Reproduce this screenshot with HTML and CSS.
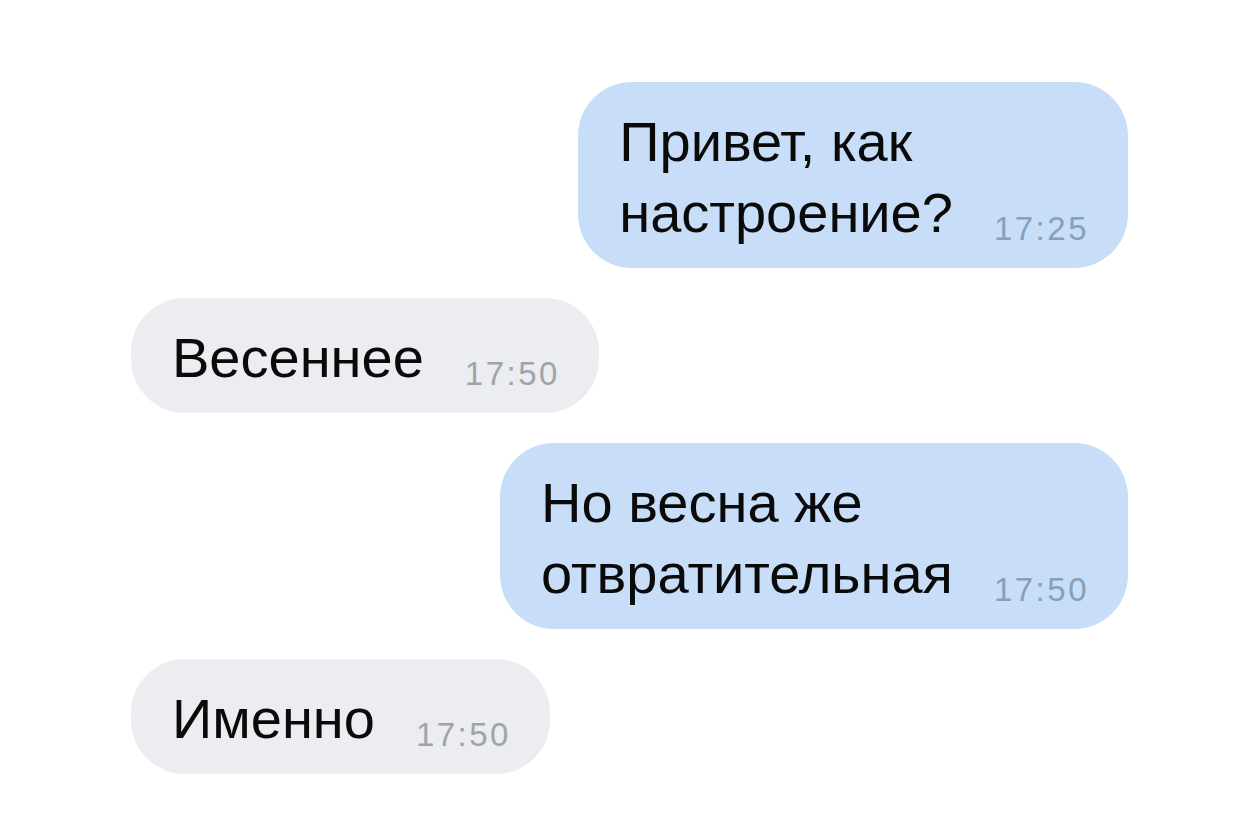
FILE: index.html
```html
<!DOCTYPE html>
<html lang="ru">
<head>
  <meta charset="UTF-8" />
  <meta name="viewport" content="width=device-width, initial-scale=1.0"/>
  <title>Чат</title>
  <link rel="stylesheet" href="styles.css">
</head>
<body>
  <div class="chat">
    <div class="msg out">
      <div class="bubble">
        <div class="text">Привет, как<br>настроение?</div>
        <span class="time">17:25</span>
      </div>
    </div>

    <div class="msg in">
      <div class="bubble">
        <div class="text">Весеннее</div>
        <span class="time">17:50</span>
      </div>
    </div>

    <div class="msg out">
      <div class="bubble">
        <div class="text">Но весна же<br>отвратительная</div>
        <span class="time">17:50</span>
      </div>
    </div>

    <div class="msg in">
      <div class="bubble">
        <div class="text">Именно</div>
        <span class="time">17:50</span>
      </div>
    </div>
  </div>
</body>
</html>
```

FILE: styles.css
```css
body {
  margin: 0;
  background: #ffffff;
  font-family: 'Liberation Sans', Arial, sans-serif;
}
.chat {
  display: flex;
  flex-direction: column;
  gap: 30px;
  padding: 82px 114px 0 131px;
}
.msg {
  display: flex;
}
.msg.out {
  justify-content: flex-end;
}
.msg.in {
  justify-content: flex-start;
}
.bubble {
  display: flex;
  align-items: flex-end;
  padding: 24px 39px 20px 41px;
  border-radius: 54px;
}
.out .bubble {
  background: #c8def8;
}
.in .bubble {
  background: #ebedf0;
}
.text {
  font-size: 56px;
  line-height: 71px;
  color: #0a0a0a;
}
.time {
  margin-left: 41px;
  font-size: 33px;
  line-height: 1.15;
  letter-spacing: 2.5px;
}
.out .time {
  color: #889fb9;
}
.in .time {
  color: #a0a4aa;
}
```
